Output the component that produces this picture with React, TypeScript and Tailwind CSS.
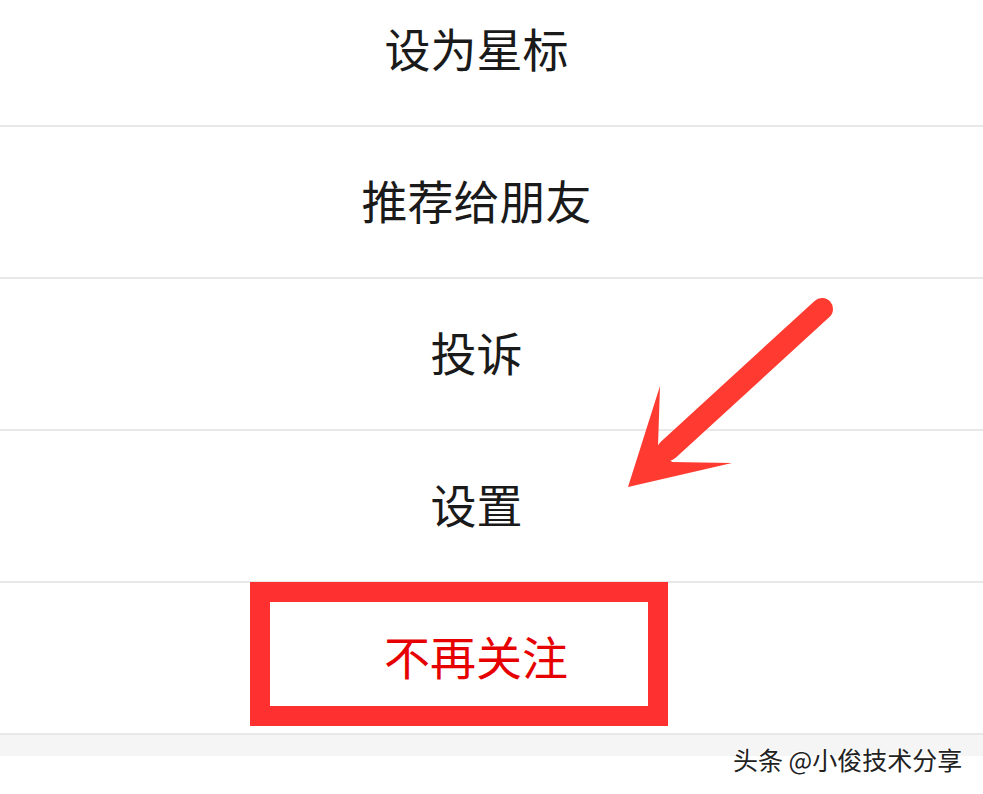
import React from "react";

const items = ["设为星标", "推荐给朋友", "投诉", "设置"];

export default function App() {
  return (
    <div
      className="relative w-[983px] h-[794px] overflow-hidden bg-white"
      style={{ fontFamily: '"Noto Sans CJK SC", "Noto Sans", sans-serif' }}
    >
      <div className="mt-[-25px] flex flex-col">
        {items.map((t) => (
          <div
            key={t}
            className="h-[152px] flex items-center justify-center pr-[30px] pb-[6px] border-b-2 border-[#e8e8e8] text-[46px] text-[#1a1a1a]"
          >
            {t}
          </div>
        ))}
        <div className="h-[152px] flex items-start justify-center pr-[65px] border-b-2 border-[#e8e8e8]">
          <div className="mt-[-1px] w-[418px] h-[144px] border-[20px] border-[#ff3030] flex items-center justify-center pt-[2px] pl-[34px] text-[46px] text-[#e60000]">
            不再关注
          </div>
        </div>
        <div className="h-[21px] bg-[#f5f5f5]" />
      </div>

      <svg className="absolute left-0 top-0" width="983" height="794" viewBox="0 0 983 794">
        <line x1="822" y1="309" x2="668" y2="450" stroke="#ff3a30" strokeWidth="22" strokeLinecap="round" />
        <polygon points="628,487 660,386 658,446 672,462 732,463" fill="#ff3a30" />
      </svg>

      <div
        className="absolute left-[733px] top-[742px] text-[25px] text-[#222] leading-[34px]"
        style={{ textShadow: "0 0 2px #fff, 1px 1px 1px #fff, -1px -1px 1px #fff" }}
      >
        头条 @小俊技术分享
      </div>
    </div>
  );
}
